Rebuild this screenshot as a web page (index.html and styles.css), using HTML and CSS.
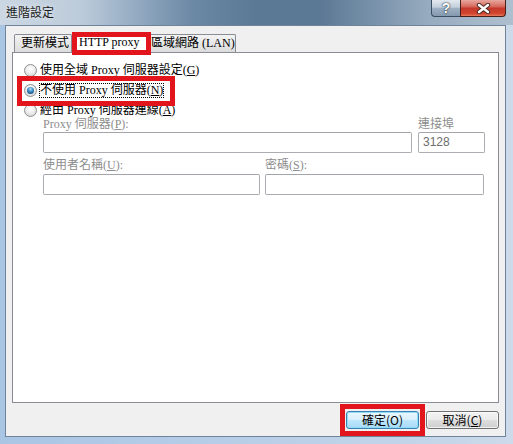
FILE: index.html
```html
<!DOCTYPE html>
<html lang="zh-Hant">
<head>
<meta charset="utf-8">
<title>進階設定</title>
<link rel="stylesheet" href="styles.css">
</head>
<body>
<div class="window">
  <div class="titlebar">
    <span class="title">進階設定</span>
    <div class="caption">
      <div class="cap-help"><span class="help-glyph">?</span></div>
      <div class="cap-close">
        <svg width="15" height="11" viewBox="0 0 15 11">
          <path d="M3 2 L12 9 M12 2 L3 9" stroke="#4a2a24" stroke-width="4.4" stroke-linecap="round"/>
          <path d="M3 2 L12 9 M12 2 L3 9" stroke="#ffffff" stroke-width="2.4" stroke-linecap="round"/>
        </svg>
      </div>
    </div>
  </div>
  <div class="client">
    <div class="tabs">
      <div class="tab tab-first">更新模式</div>
      <div class="tab tab-selected">HTTP proxy</div>
      <div class="tab tab-last">區域網路 (LAN)</div>
    </div>
    <div class="panel">
      <div class="opt"><span class="radio"></span><span class="opt-text">使用全域 Proxy 伺服器設定(<u>G</u>)</span></div>
      <div class="opt"><span class="radio checked"></span><span class="opt-text focus">不使用 Proxy 伺服器(<u>N</u>)</span></div>
      <div class="opt"><span class="radio"></span><span class="opt-text">經由 Proxy 伺服器連線(<u>A</u>)</span></div>
      <div class="fields">
        <div class="field-row">
          <div class="field f-proxy"><div class="lbl">Proxy 伺服器(<u>P</u>):</div><div class="input"></div></div>
          <div class="field f-port"><div class="lbl">連接埠</div><div class="input">3128</div></div>
        </div>
        <div class="field-row row-two">
          <div class="field f-user"><div class="lbl">使用者名稱(<u>U</u>):</div><div class="input"></div></div>
          <div class="field f-pass"><div class="lbl">密碼(<u>S</u>):</div><div class="input"></div></div>
        </div>
      </div>
    </div>
    <div class="buttons">
      <div class="btn btn-default">確定(O)</div>
      <div class="btn">取消(<u>C</u>)</div>
    </div>
  </div>
  <div class="mark mark-tab"></div>
  <div class="mark mark-radio"></div>
  <div class="mark mark-ok"></div>
</div>
</body>
</html>
```

FILE: styles.css
```css
* { box-sizing: border-box; }
html, body { margin: 0; padding: 0; }
body {
  width: 513px;
  height: 444px;
  overflow: hidden;
  background: #ffffff;
  font-family: "Liberation Serif", "Noto Sans CJK TC", serif;
  font-size: 12px;
  color: #000;
}
u { text-decoration: underline; text-underline-offset: 1px; }

.window {
  position: relative;
  width: 513px;
  height: 444px;
  display: flex;
  flex-direction: column;
  background: linear-gradient(90deg, #a9c5e4 0%, #b6cde7 40%, #c2d4e8 80%, #ccdaea 100%);
}

.titlebar {
  height: 25px;
  flex: none;
  display: flex;
  justify-content: space-between;
  align-items: flex-start;
  background: linear-gradient(90deg, #cbd7e3 0%, #bccbda 16%, #8ea6be 28%, #6a87a3 38%, #5b7894 50%, #5a7793 62%, #7690a9 72%, #98acc0 84%, #aebfcf 100%);
}
.title {
  margin: 5px 0 0 6px;
  font-family: "Noto Sans CJK TC", sans-serif;
  font-size: 12px;
  line-height: 14px;
  color: #1a1a1a;
  text-shadow: 0 0 5px rgba(255,255,255,0.9);
}
.caption {
  display: flex;
  height: 17px;
  margin-right: 7px;
}
.cap-help {
  width: 29px;
  border: 1px solid #3a4d62;
  border-top: none;
  border-right: none;
  border-radius: 0 0 0 4px;
  background: linear-gradient(#e2e8ef 0%, #c3cfdb 45%, #9eb0c3 52%, #8599ae 100%);
  display: flex;
  align-items: center;
  justify-content: center;
}
.help-glyph {
  font-family: "Liberation Sans", sans-serif;
  font-weight: bold;
  font-size: 14px;
  line-height: 14px;
  color: #ffffff;
  text-shadow: 0 0 2px #23303e, 0 0 1px #23303e;
}
.cap-close {
  width: 46px;
  border: 1px solid #4a1e18;
  border-top: none;
  border-radius: 0 0 4px 0;
  background: linear-gradient(#e7a79e 0%, #d66b5e 40%, #c4392b 52%, #d2452f 85%, #e7795d 100%);
  display: flex;
  align-items: center;
  justify-content: center;
}

.client {
  flex: 1;
  margin: 0 7px 7px 5px;
  border: 1px solid #6f849a;
  background: #f0f0f0;
  padding: 6px 6px 0 6px;
  display: flex;
  flex-direction: column;
}

.tabs {
  height: 20px;
  display: flex;
  align-items: flex-end;
}
.tab {
  height: 18px;
  border: 1px solid #898c95;
  border-bottom: none;
  border-radius: 2px 2px 0 0;
  background: linear-gradient(#f4f4f4, #e6e6e6 55%, #dcdcdc);
  font-family: "Liberation Serif", "Noto Sans CJK TC", serif;
  font-size: 12px;
  line-height: 16px;
  white-space: nowrap;
}
.tab-first {
  margin-left: 2px;
  width: 58px;
  padding-left: 6px;
}
.tab-selected {
  position: relative;
  z-index: 1;
  width: 76px;
  height: 21px;
  margin-bottom: -1px;
  background: #ffffff;
  padding-left: 7px;
  line-height: 18px;
  border-left: none;
}
.tab-last {
  width: 88px;
  padding-left: 3px;
  border-left: none;
}

.panel {
  height: 351px;
  border: 1px solid #898c95;
  background: #ffffff;
  padding: 7px 0 0 11px;
}
.opt {
  height: 20px;
  display: flex;
  align-items: center;
}
.radio {
  width: 13px;
  height: 13px;
  flex: none;
  border-radius: 50%;
  border: 1px solid #8e8f8f;
  background: radial-gradient(circle at 50% 35%, #ffffff 0%, #f0f0f0 40%, #cfcfcf 100%);
  display: flex;
  align-items: center;
  justify-content: center;
}
.radio.checked::after {
  content: "";
  width: 7px;
  height: 7px;
  border-radius: 50%;
  background: radial-gradient(circle at 50% 30%, #b8e2f8 0%, #4b9ad0 35%, #1c5a8e 75%, #123d66 100%);
}
.opt-text {
  margin-left: 2px;
  border: 1px dotted transparent;
  line-height: 13px;
  white-space: nowrap;
}
.opt-text.focus {
  border-color: #000000;
}

.fields {
  margin: -3px 0 0 19px;
}
.field-row {
  display: flex;
  gap: 6px;
}
.row-two {
  gap: 5px;
  margin-top: 5px;
}
.lbl {
  line-height: 14px;
  height: 14px;
  color: #8d8d8d;
  white-space: nowrap;
}
.input {
  margin-top: 1px;
  height: 21px;
  border: 1px solid #abadb3;
  border-top-color: #a3a5ab;
  border-radius: 2px;
  background: #ffffff;
  font-family: "Liberation Sans", sans-serif;
  font-size: 12px;
  line-height: 19px;
  padding-left: 4px;
  color: #6d6d6d;
}
.row-two .input { margin-top: 2px; }
.f-proxy { width: 369px; }
.f-port { width: 67px; }
.f-user { width: 217px; }
.f-pass { width: 219px; }

.buttons {
  margin-top: 8px;
  display: flex;
  justify-content: flex-end;
  gap: 7px;
}
.btn {
  width: 73px;
  height: 18px;
  border: 1px solid #707070;
  border-radius: 3px;
  background: linear-gradient(#f2f2f2 0%, #ebebeb 48%, #dddddd 52%, #cfcfcf 100%);
  font-family: "Noto Sans CJK TC", sans-serif;
  font-size: 12px;
  line-height: 16px;
  text-align: center;
  box-shadow: inset 0 0 0 1px rgba(255,255,255,0.7);
}
.btn-default {
  border-color: #3c7fb1;
  background: linear-gradient(#eaf6fd 0%, #d9f0fc 48%, #bee6fd 52%, #a7d9f5 100%);
  box-shadow: inset 0 0 0 1px #8fdcf7;
}

.mark {
  position: absolute;
  border: 5px solid #e2141c;
  pointer-events: none;
  z-index: 5;
}
.mark-tab { left: 72px; top: 32px; width: 79px; height: 23px; }
.mark-radio { left: 17px; top: 76px; width: 158px; height: 30px; }
.mark-ok { left: 340px; top: 404px; width: 85px; height: 32px; }
```
